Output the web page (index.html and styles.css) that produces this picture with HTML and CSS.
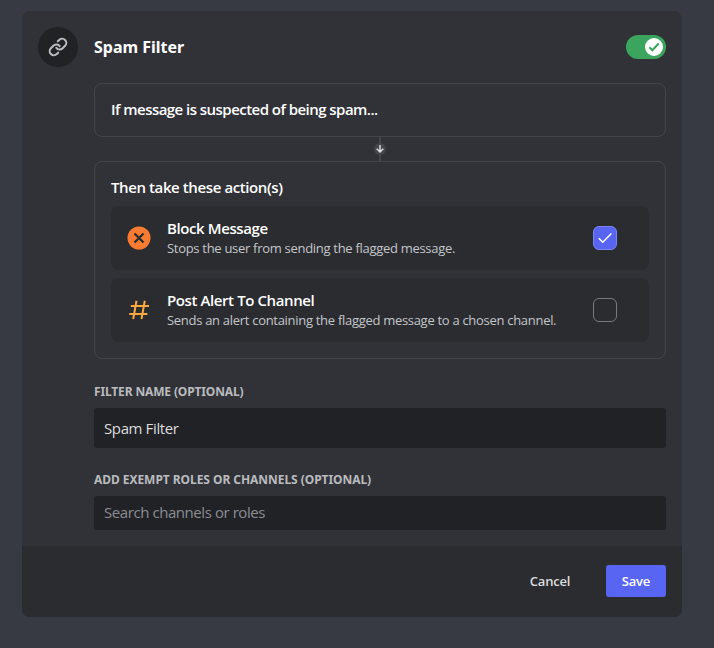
FILE: index.html
```html
<!DOCTYPE html>
<html lang="en">
<head>
<meta charset="utf-8">
<title>Spam Filter</title>
<link rel="stylesheet" href="styles.css">
</head>
<body>
<main class="card">
  <div class="card-body">
    <header class="header">
      <span class="header-icon">
        <svg width="20" height="20" viewBox="0 0 24 24" fill="none" stroke="currentColor" stroke-width="2.5" stroke-linecap="round" stroke-linejoin="round">
          <path d="M10 13a5 5 0 0 0 7.54.54l3-3a5 5 0 0 0-7.07-7.07l-1.72 1.71"/>
          <path d="M14 11a5 5 0 0 0-7.54-.54l-3 3a5 5 0 0 0 7.07 7.07l1.71-1.71"/>
        </svg>
      </span>
      <h1 class="title">Spam Filter</h1>
      <span class="switch" role="switch" aria-checked="true">
        <span class="knob">
          <svg width="18" height="18" viewBox="0 0 18 18" fill="none" stroke="#3ba55d" stroke-width="2"><path d="M4.4 9.2l2.9 3.1 6.4-6.8"/></svg>
        </span>
      </span>
    </header>

    <div class="content">
      <section class="panel trigger"><h2 class="heading trigger-text">If message is suspected of being spam...</h2></section>
      <div class="connector">
        <span class="connector-dot">
          <svg width="12" height="12" viewBox="0 0 12 12" fill="none" stroke="#dcddde" stroke-width="1.5"><path d="M6 2v7M2.7 5.7L6 9l3.3-3.3"/></svg>
        </span>
      </div>
      <section class="panel actions">
        <h2 class="heading">Then take these action(s)</h2>
        <div class="action">
          <svg class="action-icon" width="24" height="24" viewBox="0 0 24 24"><circle cx="12" cy="12" r="11.5" fill="#f97b32"/><path d="M7.5 7.5l9 9m0-9l-9 9" stroke="#2b2c30" stroke-width="2.3"/></svg>
          <div class="action-text">
            <h3 class="heading">Block Message</h3>
            <p class="description">Stops the user from sending the flagged message.</p>
          </div>
          <span class="checkbox checked"><svg width="22" height="22" viewBox="0 0 22 22" fill="none" stroke="#fff" stroke-width="1.5"><path d="M4.8 11.2l4 4L17.4 6.5"/></svg></span>
        </div>
        <div class="action">
          <svg class="action-icon" width="24" height="24" viewBox="0 0 24 24" fill="none" stroke="#faa941" stroke-width="2"><path d="M9.5 2.8L6.2 21M17.8 2.8L14.5 21M3.8 8H22M2.2 16h18.2"/></svg>
          <div class="action-text">
            <h3 class="heading">Post Alert To Channel</h3>
            <p class="description">Sends an alert containing the flagged message to a chosen channel.</p>
          </div>
          <span class="checkbox"></span>
        </div>
      </section>

      <label class="label label-name" for="name">Filter name (optional)</label>
      <input class="input name-input" id="name" type="text" value="Spam Filter">
      <label class="label label-exempt" for="exempt">Add exempt roles or channels (optional)</label>
      <input class="input exempt-input" id="exempt" type="text" placeholder="Search channels or roles">
    </div>
  </div>
  <footer class="footer">
    <button class="button cancel" type="button">Cancel</button>
    <button class="button save" type="button">Save</button>
  </footer>
</main>
</body>
</html>
```

FILE: styles.css
```css
* { box-sizing: border-box; }
body {
  margin: 0;
  padding: 11px 32px 31px 22px;
  background: #373a43;
  color: #fff;
  font-family: "Open Sans", "Noto Sans", sans-serif;
  overflow: hidden;
}
h1, h2, h3, p { margin: 0; }
svg { display: block; }
.card { width: 660px; height: 606px; border-radius: 8px; overflow: hidden; background: #313237; }
.card-body { height: 535px; padding: 16px; }
.header { display: flex; align-items: center; height: 40px; }
.header-icon { display: grid; place-items: center; width: 40px; height: 40px; margin-right: 16px; border-radius: 50%; background: #212226; color: #b9bbbe; }
.title { flex: 1; font-family: "Noto Sans", sans-serif; font-size: 16px; line-height: 20px; font-weight: 700; white-space: nowrap; }
.switch { display: flex; justify-content: flex-end; width: 40px; height: 24px; padding: 3px; border-radius: 12px; background: #3ba55d; }
.knob { width: 18px; height: 18px; border-radius: 50%; background: #fff; }
.content { display: flex; flex-direction: column; margin: 16px 0 0 56px; }
.panel { border: 1px solid #43454b; border-radius: 8px; }
.heading { font-size: 15px; line-height: 18px; padding-bottom: 2px; font-weight: 600; letter-spacing: -.4px; white-space: nowrap; }
.trigger { height: 54px; padding: 16px; }
.trigger-text { letter-spacing: -.54px; }
.connector { display: grid; place-items: center; height: 24px; background: linear-gradient(#43454b, #43454b) center / 2px 100% no-repeat; }
.connector-dot { width: 12px; height: 12px; border-radius: 50%; background: #43454b; }
.actions { height: 198px; padding: 16px; }
.action { display: flex; align-items: center; height: 64px; margin-top: 8px; padding: 0 32px 0 16px; border-radius: 8px; background: #2b2c30; }
.action-icon { flex: none; margin-right: 16px; }
.action-text { flex: 1; min-width: 0; }
.description { color: #c4c6ca; font-size: 13px; line-height: 18px; letter-spacing: -.295px; white-space: nowrap; }
.checkbox { flex: none; width: 24px; height: 24px; border: 1px solid #777a80; border-radius: 6px; }
.checked { border-color: #7b85f6; background: #5865f2; }
.label { color: #b9bbbe; font-family: "Noto Sans", sans-serif; font-size: 12px; line-height: 16px; font-weight: 700; text-transform: uppercase; white-space: nowrap; letter-spacing: -.05px; }
.label-name { margin: 25px 0 8px; letter-spacing: -.14px; }
.label-exempt { margin: 24px 0 8px; }
.input { width: 100%; padding: 0 10px; border: 0; border-radius: 3px; outline: 0; background: #212226; color: #dcddde; font-family: inherit; font-size: 15px; letter-spacing: -.38px; }
.input::placeholder { color: #8b8d93; opacity: 1; }
.name-input { height: 40px; }
.exempt-input { height: 34px; padding-bottom: 2px; letter-spacing: -.43px; }
.footer { display: flex; justify-content: flex-end; gap: 8px; height: 71px; padding: 19px 16px; background: #2b2c30; }
.button { height: 32px; padding: 0; border: 0; border-radius: 3px; color: #fff; font-family: inherit; font-size: 13px; font-weight: 600; letter-spacing: -.2px; }
.cancel { width: 96px; background: transparent; color: #dcddde; }
.save { width: 60px; background: #5865f2; }
```
